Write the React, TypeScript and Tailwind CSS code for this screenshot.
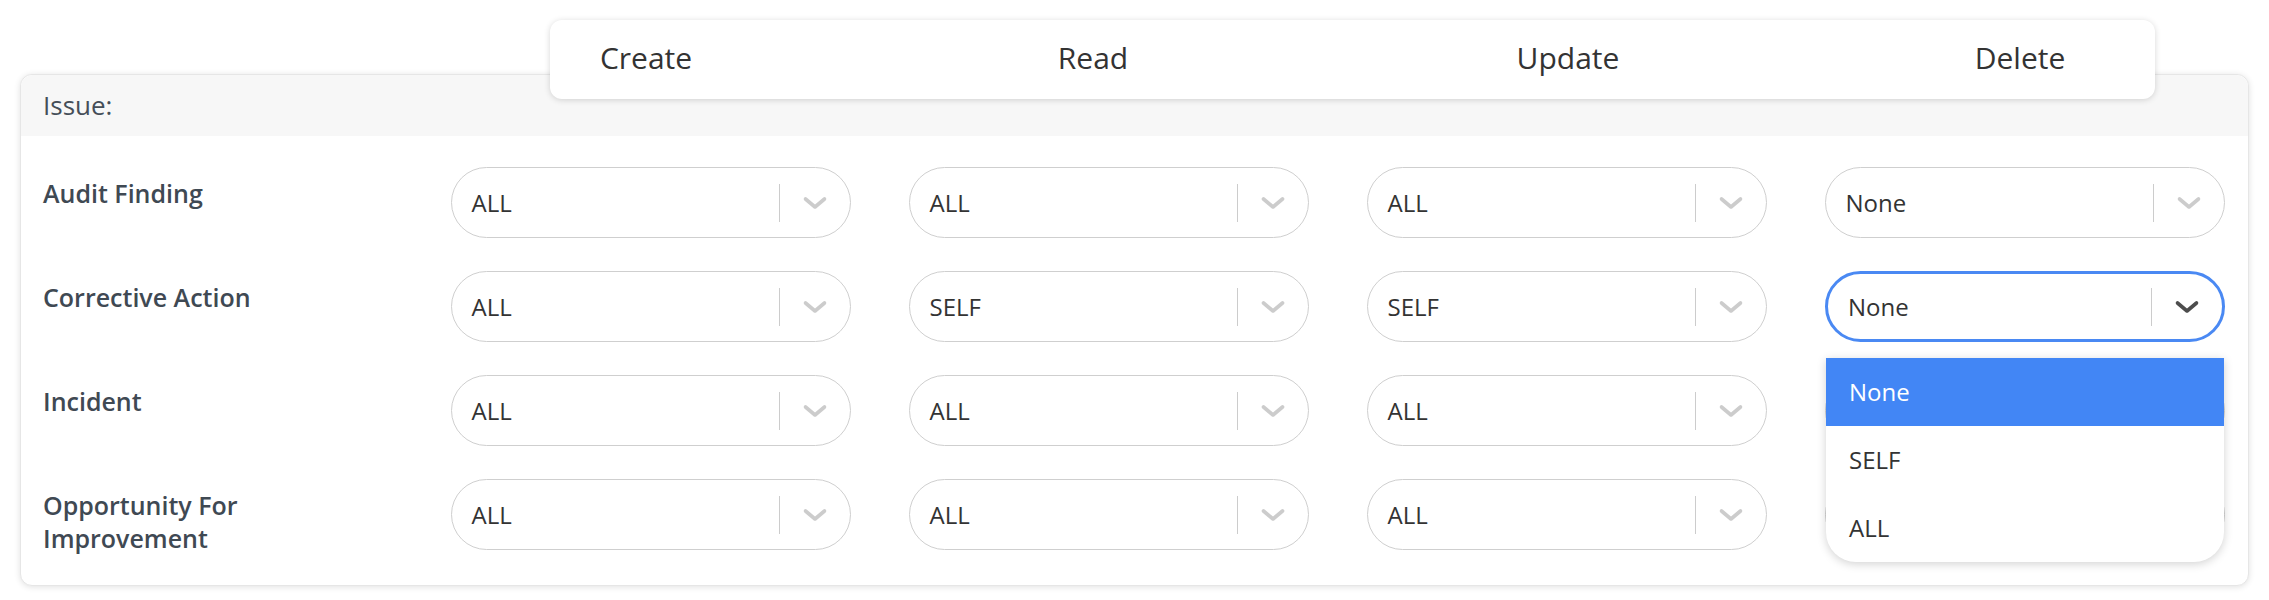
const COLUMNS = ['Create', 'Read', 'Update', 'Delete']

const ROWS: { label: string; values: string[] }[] = [
  { label: 'Audit Finding', values: ['ALL', 'ALL', 'ALL', 'None'] },
  { label: 'Corrective Action', values: ['ALL', 'SELF', 'SELF', 'None'] },
  { label: 'Incident', values: ['ALL', 'ALL', 'ALL', 'ALL'] },
  { label: 'Opportunity For Improvement', values: ['ALL', 'ALL', 'ALL', 'ALL'] },
]

const OPTIONS = ['None', 'SELF', 'ALL']

function Chevron({ dark }: { dark?: boolean }) {
  return (
    <svg width="26" height="14" viewBox="0 0 26 14" fill="none">
      <path
        d="M3.5 3 L13 11 L22.5 3"
        stroke={dark ? '#4d4d4d' : '#cccccc'}
        strokeWidth="3.6"
        strokeLinecap="round"
        strokeLinejoin="round"
      />
    </svg>
  )
}

function Select({ value, focused }: { value: string; focused?: boolean }) {
  return (
    <div className="relative w-[400px]">
      <div
        className={`flex h-[71px] items-center rounded-full bg-white ${
          focused ? 'border-[3px] border-[#4a89f3] pl-[20px]' : 'border-[1.5px] border-[#cfcfcf] pl-[19.5px]'
        }`}
      >
        <span className="flex-1 text-[24px] text-[#333333]">{value}</span>
        <div className="h-[38px] w-[1.5px] bg-[#cccccc]" />
        <div className="flex w-[70px] items-center justify-center">
          <Chevron dark={focused} />
        </div>
      </div>

      {/* open menu */}
      {focused && (
        <div className="absolute left-px right-px top-full z-20 mt-[16px] overflow-hidden rounded-b-[30px] bg-white shadow-[0_2px_10px_rgba(0,0,0,0.18)]">
          {OPTIONS.map((opt) => (
            <div
              key={opt}
              className={`flex h-[68px] items-center pl-[23px] text-[24px] ${
                opt === value ? 'bg-[#4286f5] text-white' : 'text-[#333333]'
              }`}
            >
              {opt}
            </div>
          ))}
        </div>
      )}
    </div>
  )
}

export default function App() {
  return (
    <div className="relative h-[600px] w-[2269px] bg-white pt-[74px] font-['Open_Sans',sans-serif]">
      {/* floating column header */}
      <div className="absolute left-[550px] top-[20px] z-10 flex h-[79px] w-[1605px] items-center rounded-[12px] bg-white pb-[5px] shadow-[0_1px_6px_rgba(0,0,0,0.16)]">
        <div className="ml-[6px] w-[180px] text-center text-[30px] text-[#333333]">{COLUMNS[0]}</div>
        <div className="ml-[267px] w-[180px] text-center text-[30px] text-[#333333]">{COLUMNS[1]}</div>
        <div className="ml-[295px] w-[180px] text-center text-[30px] text-[#333333]">{COLUMNS[2]}</div>
        <div className="ml-[272px] w-[180px] text-center text-[30px] text-[#333333]">{COLUMNS[3]}</div>
      </div>

      <div className="ml-[20px] w-[2229px] rounded-[12px] border-[1.5px] border-[#e6e6e6] bg-white shadow-[0_1px_6px_rgba(0,0,0,0.12)]">
        <div className="flex h-[61px] items-center rounded-t-[12px] bg-[#f7f7f7] pl-[22px] text-[26px] text-[#454e58]">
          Issue:
        </div>

        <div className="flex flex-col gap-[33px] px-[22px] pb-[30px] pt-[31px]">
          {ROWS.map((row, r) => (
            <div key={row.label} className="flex items-start gap-[58px]">
              <div className="w-[350px] pt-[10px] text-[25px] font-semibold leading-[33px] text-[#3f4953]">
                <div className="max-w-[300px]">{row.label}</div>
              </div>
              {row.values.map((v, c) => (
                <Select key={c} value={v} focused={r === 1 && c === 3} />
              ))}
            </div>
          ))}
        </div>
      </div>
    </div>
  )
}
